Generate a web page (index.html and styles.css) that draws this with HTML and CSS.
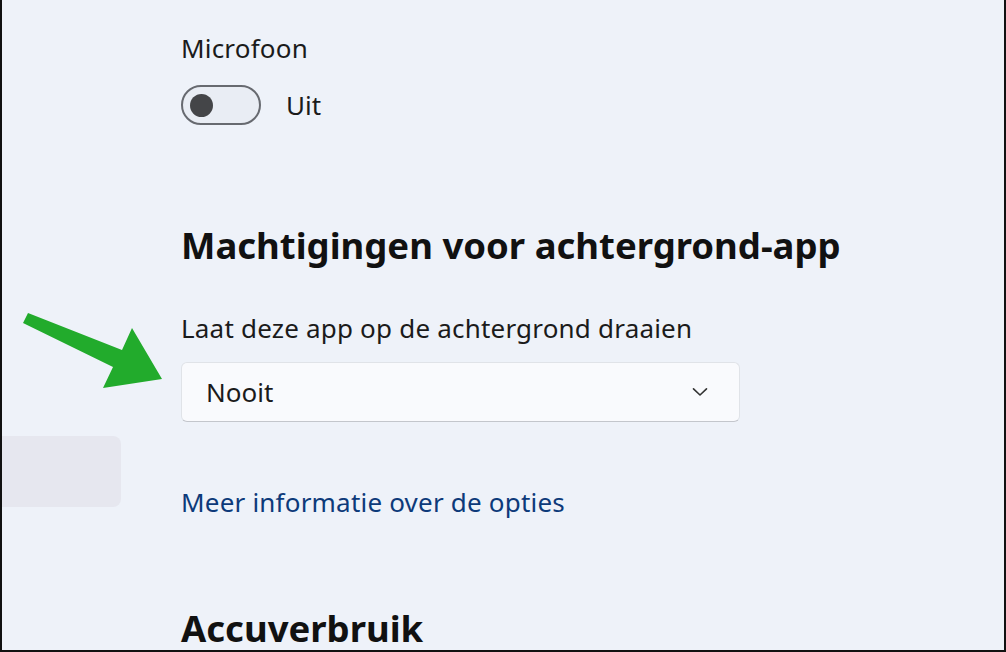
FILE: index.html
```html
<!DOCTYPE html>
<html lang="nl">
<head>
    <meta charset="UTF-8" />
    <meta name="viewport" content="width=device-width, initial-scale=1" />
    <title>App-instellingen</title>
    <link rel="stylesheet" href="styles.css">
</head>
<body>
    <div class="frame">
        <div class="sidebar">
            <div class="nav-item"></div>
        </div>

        <div class="content">
            <div class="field-label">Microfoon</div>
            <div class="toggle-row">
                <span class="toggle"><span class="knob"></span></span>
                <span class="toggle-text">Uit</span>
            </div>

            <h2 class="section-title">Machtigingen voor achtergrond-app</h2>
            <div class="field-label label-bg">Laat deze app op de achtergrond draaien</div>
            <div class="dropdown">
                <span>Nooit</span>
                <svg class="chevron" width="16" height="10" viewBox="0 0 16 10">
                    <path d="M1.5 1.8 L8 8 L14.5 1.8" fill="none" stroke="#333" stroke-width="1.6" stroke-linecap="round" stroke-linejoin="round"/>
                </svg>
            </div>

            <a class="more-link" href="#">Meer informatie over de opties</a>

            <h2 class="section-title title-accu">Accuverbruik</h2>
        </div>

        <!-- annotation arrow over the screenshot -->
        <svg class="arrow" width="170" height="90" viewBox="0 0 170 90">
            <polygon points="28,8 122,45 132,23 162,74 103,83 113,62 23,18" fill="#22ab2c"/>
        </svg>
    </div>
</body>
</html>
```

FILE: styles.css
```css
body {
    margin: 0;
    font-family: "Noto Sans", "Open Sans", sans-serif;
    color: #1b1b1b;
}
.frame {
    position: relative;
    width: 1006px;
    height: 652px;
    box-sizing: border-box;
    background-color: #eef2f9;
    border-left: 2px solid #111;
    border-right: 2px solid #111;
    border-bottom: 2px solid #111;
    display: flex;
    overflow: hidden;
}
.sidebar {
    width: 119px;
    flex-shrink: 0;
    padding-top: 436px;
}
.nav-item {
    height: 71px;
    background-color: #e6e7ef;
    border-radius: 0 8px 8px 0;
}
.content {
    margin-left: 60px;
    padding-top: 33px;
    display: flex;
    flex-direction: column;
    align-items: flex-start;
}
.field-label {
    font-size: 26px;
    line-height: 30px;
    letter-spacing: 0.2px;
}
.toggle-row {
    margin-top: 22px;
    display: flex;
    align-items: center;
    gap: 25px;
}
.toggle {
    width: 80px;
    height: 40px;
    box-sizing: border-box;
    border: 2px solid #676a70;
    border-radius: 20px;
    background-color: #e9edf4;
    display: flex;
    align-items: center;
    padding-left: 7px;
}
.knob {
    width: 23px;
    height: 23px;
    border-radius: 50%;
    background-color: #444548;
}
.toggle-text {
    font-size: 26px;
    line-height: 30px;
}
.section-title {
    margin: 98px 0 0;
    font-size: 36.5px;
    line-height: 44px;
    font-weight: 700;
    color: #111;
}
.label-bg {
    margin-top: 46px;
}
.dropdown {
    margin-top: 19px;
    width: 559px;
    height: 62px;
    box-sizing: border-box;
    background-color: #f9fafd;
    border: 1px solid #e0e3e8;
    border-bottom-color: #c3c6cc;
    border-radius: 6px;
    padding: 0 31px 0 24px;
    display: flex;
    align-items: center;
    justify-content: space-between;
    font-size: 26px;
}
.more-link {
    margin-top: 65px;
    font-size: 26px;
    line-height: 30px;
    letter-spacing: 0.2px;
    color: #0d3a7a;
    text-decoration: none;
}
.title-accu {
    margin-top: 89px;
}
.arrow {
    position: absolute;
    left: -2px;
    top: 305px;
}
```
